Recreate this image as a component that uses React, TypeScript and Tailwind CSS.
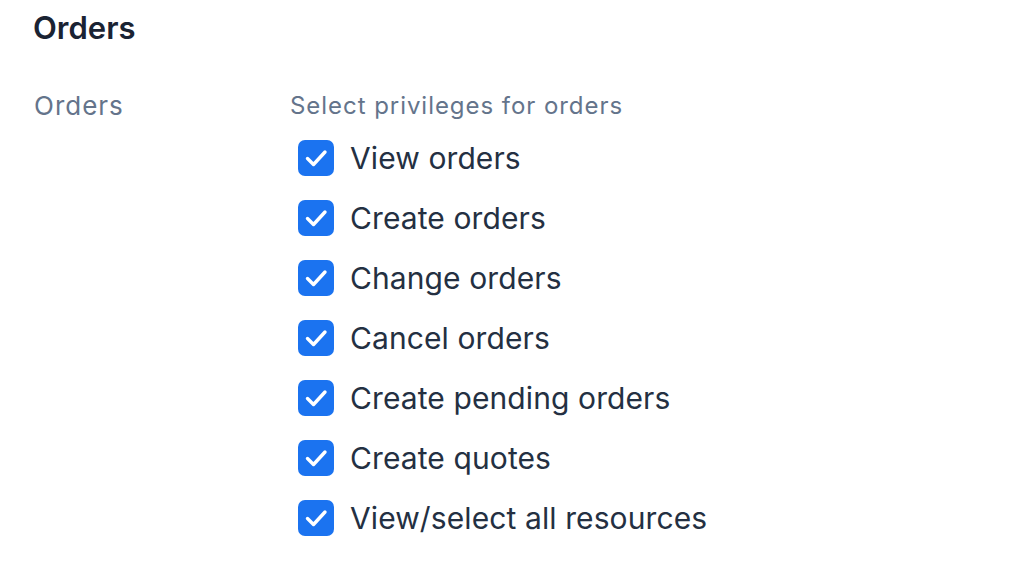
import React from 'react';

const privileges = [
    'View orders',
    'Create orders',
    'Change orders',
    'Cancel orders',
    'Create pending orders',
    'Create quotes',
    'View/select all resources',
];

const CheckIcon = () => (
    <svg viewBox="0 0 36 36" className="w-[36px] h-[36px]" fill="none">
        <path d="M9.5 18.5l6 6L27 12" stroke="white" strokeWidth="3.4" strokeLinecap="round" strokeLinejoin="round" />
    </svg>
);

const App = () => {
    return (
        <div className="w-[1012px] h-[570px] bg-white overflow-hidden" style={{ fontFamily: 'Inter, "Noto Sans", sans-serif' }}>
            <div className="pl-[33px] pt-[10px]">
                <h1 className="text-[31px] leading-[36px] font-semibold text-[#1a2333]">Orders</h1>
            </div>
            <div className="flex pt-[45px]">
                <div className="w-[290px] pl-[34px]">
                    <span className="text-[26px] leading-[30px] text-[#64748b] tracking-[1px]">Orders</span>
                </div>
                <div className="flex flex-col">
                    <span className="text-[24px] leading-[30px] text-[#64748b] tracking-[0.95px]">Select privileges for orders</span>
                    <div className="flex flex-col mt-[7px]">
                        {privileges.map((p) => (
                            <label key={p} className="flex items-center h-[60px] gap-[16px] pl-[8px]">
                                <span className="w-[36px] h-[36px] rounded-[7px] bg-[#1b73f0] flex items-center justify-center">
                                    <CheckIcon />
                                </span>
                                <span className="text-[30px] text-[#243042] tracking-[0.1px]">{p}</span>
                            </label>
                        ))}
                    </div>
                </div>
            </div>
        </div>
    );
};

export default App;
